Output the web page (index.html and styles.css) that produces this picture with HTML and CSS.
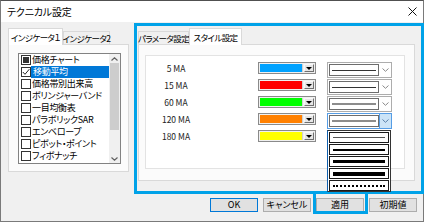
FILE: index.html
```html
<!DOCTYPE html>
<html lang="ja">
<head>
<meta charset="utf-8">
<title>テクニカル設定</title>
<link rel="stylesheet" href="styles.css">
</head>
<body>
<div class="window">
  <div class="titlebar">
    <span class="title">テクニカル設定</span>
    <svg class="close" width="9" height="9" viewBox="0 0 9 9"><path d="M0.5 0.5 L8.5 8.5 M8.5 0.5 L0.5 8.5" stroke="#111" stroke-width="1"/></svg>
  </div>
  <div class="main">
    <div class="tabctl left">
      <div class="tabs">
        <div class="tab active w55">インジケータ１</div>
        <div class="tab w47">インジケータ2</div>
      </div>
      <div class="page left-page">
        <div class="list">
          <div class="items">
            <div class="item"><span class="cb"><span class="ind"></span></span><span class="txt">価格チャート</span></div>
            <div class="item sel"><span class="cb"><svg width="8" height="8" viewBox="0 0 8 8"><path d="M0.8 4 L3 6.3 L7.3 1.2" fill="none" stroke="#222" stroke-width="1"/></svg></span><span class="txt">移動平均</span></div>
            <div class="item"><span class="cb"></span><span class="txt">価格帯別出来高</span></div>
            <div class="item"><span class="cb"></span><span class="txt">ボリンジャーバンド</span></div>
            <div class="item"><span class="cb"></span><span class="txt">一目均衡表</span></div>
            <div class="item"><span class="cb"></span><span class="txt">パラボリックSAR</span></div>
            <div class="item"><span class="cb"></span><span class="txt">エンベロープ</span></div>
            <div class="item"><span class="cb"></span><span class="txt">ピボット・ポイント</span></div>
            <div class="item"><span class="cb"></span><span class="txt">フィボナッチ</span></div>
          </div>
          <div class="scrollbar">
            <span class="sb-btn"><svg width="7" height="4" viewBox="0 0 7 4"><path d="M0.5 3.5 L3.5 0.8 L6.5 3.5" fill="none" stroke="#606060" stroke-width="1.2"/></svg></span>
            <span class="thumb"></span>
            <span class="sb-gap"></span>
            <span class="sb-btn"><svg width="7" height="4" viewBox="0 0 7 4"><path d="M0.5 0.5 L3.5 3.2 L6.5 0.5" fill="none" stroke="#606060" stroke-width="1.2"/></svg></span>
          </div>
        </div>
      </div>
    </div>
    <div class="tabctl right">
      <div class="tabs">
        <div class="tab w51">パラメータ設定</div>
        <div class="tab active w53">スタイル設定</div>
      </div>
      <div class="page right-page">
        <div class="inner">
          <div class="row">
            <span class="lbl">5 MA</span>
            <span class="color"><span class="swatch c-blue"></span><span class="cbtn"><span class="tri"></span></span></span>
            <span class="line"><span class="lbox"><span class="lbar dark"></span></span><span class="chev"><svg width="7" height="4" viewBox="0 0 7 4"><path d="M0.5 0.5 L3.5 3.3 L6.5 0.5" fill="none" stroke="#8a8a8a" stroke-width="1"/></svg></span></span>
          </div>
          <div class="row">
            <span class="lbl">15 MA</span>
            <span class="color"><span class="swatch c-red"></span><span class="cbtn"><span class="tri"></span></span></span>
            <span class="line"><span class="lbox"><span class="lbar dark"></span></span><span class="chev"><svg width="7" height="4" viewBox="0 0 7 4"><path d="M0.5 0.5 L3.5 3.3 L6.5 0.5" fill="none" stroke="#8a8a8a" stroke-width="1"/></svg></span></span>
          </div>
          <div class="row">
            <span class="lbl">60 MA</span>
            <span class="color"><span class="swatch c-green"></span><span class="cbtn"><span class="tri"></span></span></span>
            <span class="line"><span class="lbox"><span class="lbar gray"></span></span><span class="chev"><svg width="7" height="4" viewBox="0 0 7 4"><path d="M0.5 0.5 L3.5 3.3 L6.5 0.5" fill="none" stroke="#8a8a8a" stroke-width="1"/></svg></span></span>
          </div>
          <div class="row">
            <span class="lbl">120 MA</span>
            <span class="color"><span class="swatch c-orange"></span><span class="cbtn"><span class="tri"></span></span></span>
            <span class="line open"><span class="lbox"><span class="lbar gray"></span></span><span class="chev"><svg width="7" height="4" viewBox="0 0 7 4"><path d="M0.5 0.5 L3.5 3.3 L6.5 0.5" fill="none" stroke="#5a7fa8" stroke-width="1"/></svg></span>
              <span class="dropdown">
                <span class="opt"><span class="obar w1"></span></span>
                <span class="opt"><span class="obar w2"></span></span>
                <span class="opt"><span class="obar w3"></span></span>
                <span class="opt"><span class="obar w4"></span></span>
                <span class="opt"><span class="obar dots"></span></span>
              </span>
            </span>
          </div>
          <div class="row">
            <span class="lbl">180 MA</span>
            <span class="color"><span class="swatch c-yellow"></span><span class="cbtn"><span class="tri"></span></span></span>
          </div>
        </div>
      </div>
    </div>
  </div>
  <div class="buttons">
    <button class="btn default">OK</button>
    <button class="btn">キャンセル</button>
    <button class="btn apply">適用<span class="hl"></span></button>
    <button class="btn">初期値</button>
  </div>
  <div class="annot"></div>
</div>
</body>
</html>
```

FILE: styles.css
```css
* { box-sizing: border-box; }
html, body { margin: 0; padding: 0; }
body {
  width: 424px;
  height: 222px;
  overflow: hidden;
  background: #ffffff;
  font-family: "Noto Sans CJK JP", "Noto Sans", sans-serif;
  font-size: 9px;
  color: #000;
  font-feature-settings: "palt";
}
.window {
  position: relative;
  width: 424px;
  height: 222px;
  border: 1px solid #7a7a7a;
  border-top-color: #505050;
  background: #f0f0f0;
  display: flex;
  flex-direction: column;
}
.titlebar {
  flex: none;
  height: 21px;
  background: #ffffff;
  display: flex;
  align-items: center;
  justify-content: space-between;
  padding: 0 6px 0 6px;
}
.title { font-size: 10px; letter-spacing: -0.2px; }
.close { display: block; }

.main {
  flex: none;
  display: flex;
  height: 170px;
  padding: 6px 0 0 7px;
}
.tabctl { display: flex; flex-direction: column; }
.tabctl.left { width: 121px; }
.tabctl.right { width: 277px; margin-left: 9px; }
.tabs { display: flex; align-items: flex-end; height: 16px; }
.tab {
  height: 13px;
  border: 1px solid #d9d9d9;
  border-bottom: none;
  background: #f0f0f0;
  display: flex;
  align-items: center;
  justify-content: center;
  line-height: 11px;
  font-size: 8.5px;
  letter-spacing: -0.6px;
  white-space: nowrap;
}
.tab.active {
  height: 17px;
  background: #ffffff;
  margin-bottom: -1px;
  position: relative;
  z-index: 1;
}
.w55 { width: 55px; }
.w47 { width: 47px; }
.w51 { width: 51px; }
.w53 { width: 53px; }

.page {
  border: 1px solid #d9d9d9;
  background: #fbfbfb;
}
.left-page { height: 128px; padding: 8px 0 0 9px; }
.right-page { height: 137px; padding: 10px 0 0 6px; }

.list {
  width: 103px;
  height: 111px;
  border: 1px solid #828282;
  background: #ffffff;
  display: flex;
}
.items { width: 90px; flex: none; }
.item { height: 12px; display: flex; align-items: center; }
.cb {
  flex: none;
  width: 10px;
  height: 10px;
  margin-left: 2px;
  border: 1px solid #333333;
  background: #ffffff;
  display: flex;
  align-items: center;
  justify-content: center;
}
.cb svg { display: block; }
.ind { width: 6px; height: 6px; background: #333333; }
.txt {
  flex: 1;
  height: 12px;
  line-height: 12px;
  padding-left: 2px;
  margin-left: -1px;
  white-space: nowrap;
  overflow: hidden;
  letter-spacing: -0.3px;
}
.item.sel .txt { background: #0078d7; color: #ffffff; margin-left: 0; }

.scrollbar {
  width: 11px;
  flex: none;
  background: #f0f0f0;
  display: flex;
  flex-direction: column;
}
.sb-btn { height: 9px; display: flex; align-items: center; justify-content: center; flex: none; }
.sb-btn svg { display: block; }
.thumb { height: 67px; margin: 0 1px; background: #cdcdcd; flex: none; }
.sb-gap { flex: 1; }

.inner {
  width: 260px;
  height: 114px;
  border: 1px solid #e3e3e3;
  background: #ffffff;
  padding-top: 6px;
}
.row { display: flex; align-items: flex-start; height: 17px; }
.lbl {
  width: 60px;
  text-align: center;
  line-height: 12px;
  font-size: 8.5px;
  color: #222;
}
.color {
  width: 58px;
  height: 12px;
  margin-left: 52px;
  border: 1px solid #8a8a8a;
  background: #f0f0f0;
  display: flex;
  padding: 1px;
}
.swatch { flex: 1; border-right: 1px solid #d0d0d0; }
.c-blue { background: #00a2ff; }
.c-red { background: #ff0000; }
.c-green { background: #00ff00; }
.c-orange { background: #ff8000; }
.c-yellow { background: #ffff00; }
.cbtn {
  width: 10px;
  margin-left: 1px;
  background: #e6e6e6;
  border: 1px solid #f8f8f8;
  border-right-color: #707070;
  border-bottom-color: #707070;
  display: flex;
  align-items: center;
  justify-content: center;
}
.tri {
  width: 0;
  height: 0;
  border-left: 3px solid transparent;
  border-right: 3px solid transparent;
  border-top: 3px solid #000;
}
.line {
  position: relative;
  width: 65px;
  height: 16px;
  margin-left: 11px;
  border: 1px solid #adadad;
  background: #ffffff;
  display: flex;
  align-items: center;
  padding-left: 1px;
}
.lbox {
  width: 50px;
  height: 12px;
  border: 1px solid #6d6d6d;
  display: flex;
  align-items: center;
  padding: 0 2px;
}
.lbar { flex: 1; }
.lbar.dark { height: 1px; background: #333333; }
.lbar.gray { height: 2px; background: #8c8c8c; }
.chev { flex: 1; height: 100%; display: flex; align-items: center; justify-content: center; }
.chev svg { display: block; }
.line.open { border-color: #569de5; }
.line.open .chev { background: #cce4f7; border-left: 1px solid #569de5; }

.dropdown {
  position: absolute;
  top: 16px;
  left: -1px;
  width: 64px;
  height: 62px;
  background: #ffffff;
  border: 1px solid #333333;
  border-left-color: #0f5fae;
  padding: 1px 1px 0 1px;
  overflow: hidden;
  z-index: 2;
}
.opt {
  display: flex;
  align-items: center;
  height: 11px;
  margin-bottom: 1px;
  border: 1px solid #1a1a1a;
  padding: 0 3px;
}
.obar { flex: 1; }
.obar.w1 { height: 1px; background: #555555; }
.obar.w2 { height: 2px; background: #000000; }
.obar.w3 { height: 3px; background: #000000; }
.obar.w4 { height: 4px; background: #000000; }
.obar.dots { height: 0; border-top: 2px dotted #000000; }

.buttons {
  flex: none;
  display: flex;
  justify-content: flex-end;
  gap: 5px;
  padding: 6px 6px 0 0;
}
.btn {
  position: relative;
  width: 48px;
  height: 14px;
  padding: 0;
  border: 1px solid #adadad;
  background: #e1e1e1;
  font-family: inherit;
  font-size: 9px;
  line-height: 12px;
  color: #000;
  font-feature-settings: "palt";
}
.btn.default { border-color: #0078d7; }
.hl {
  position: absolute;
  left: -4px;
  top: -8px;
  width: 55px;
  height: 23px;
  border: 3px solid #00a2e8;
}
.annot {
  position: absolute;
  left: 133px;
  top: 22px;
  width: 290px;
  height: 171px;
  border: 3px solid #00a2e8;
  pointer-events: none;
}
```
